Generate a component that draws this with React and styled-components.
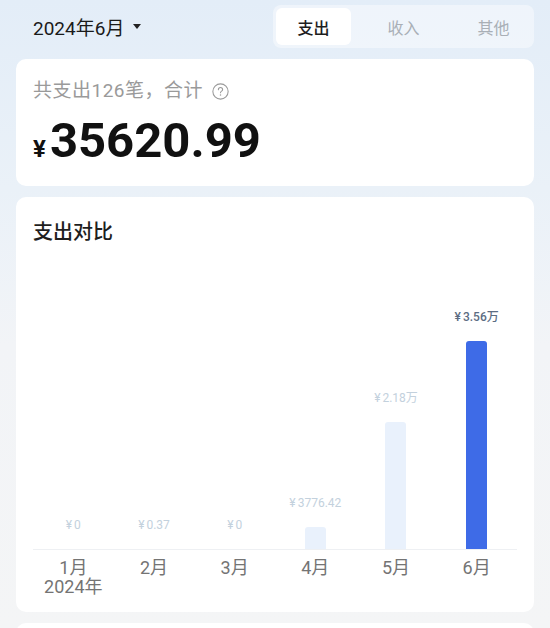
import React from "react";
import styled, { createGlobalStyle } from "styled-components";

const GlobalStyle = createGlobalStyle`
  body {
    margin: 0;
    font-family: Roboto, "Noto Sans CJK SC", sans-serif;
    background: #f4f5f7;
  }
`;

const months = [
  { month: "1月", year: "2024年", value: 0, label: "0" },
  { month: "2月", value: 0.37, label: "0.37" },
  { month: "3月", value: 0, label: "0" },
  { month: "4月", value: 3776.42, label: "3776.42" },
  { month: "5月", value: 21800, label: "2.18万" },
  { month: "6月", value: 35620.99, label: "3.56万", active: true },
];

const MAX_BAR = 208;

const App = () => {
  const max = Math.max(...months.map((m) => m.value));
  return (
    <Page>
      <GlobalStyle />
      <Header>
        <DatePicker>
          2024年6月
          <Caret />
        </DatePicker>
        <Tabs>
          <Tab $active>支出</Tab>
          <Tab>收入</Tab>
          <Tab>其他</Tab>
        </Tabs>
      </Header>

      <Card>
        <Summary>
          共支出126笔，合计
          <HelpIcon viewBox="0 0 16 16">
            <circle cx="8" cy="8" r="7.2" fill="none" stroke="#9a9a9a" strokeWidth="1" />
            <path
              d="M6 6.3a2 2 0 0 1 4 0c0 1.3-2 1.4-2 2.8"
              fill="none"
              stroke="#9a9a9a"
              strokeWidth="1"
              strokeLinecap="round"
            />
            <circle cx="8" cy="11.4" r="0.7" fill="#9a9a9a" />
          </HelpIcon>
        </Summary>
        <Amount>
          <Yen>¥</Yen>35620.99
        </Amount>
      </Card>

      <ChartCard>
        <Title>支出对比</Title>
        <Plot>
          {months.map((m) => (
            <Column key={m.month}>
              <BarLabel $active={m.active}>
                <small>¥</small>
                {m.label}
              </BarLabel>
              <Bar
                $active={m.active}
                style={{ height: `${(m.value / max) * MAX_BAR}px` }}
              />
            </Column>
          ))}
        </Plot>
        <Axis>
          {months.map((m) => (
            <Tick key={m.month}>
              <span>{m.month}</span>
              {m.year && <span>{m.year}</span>}
            </Tick>
          ))}
        </Axis>
      </ChartCard>

      <Card />
    </Page>
  );
};

export default App;

const Page = styled.div`
  height: 628px;
  padding: 0 16px;
  box-sizing: border-box;
  background: linear-gradient(180deg, #e3edf8 0%, #eaf1f8 30%, #f2f4f7 55%, #f4f5f6 100%);
  overflow: hidden;
`;

const Header = styled.div`
  height: 53px;
  display: flex;
  align-items: center;
  justify-content: space-between;
  margin-bottom: 6px;
`;

const DatePicker = styled.div`
  display: flex;
  align-items: center;
  padding-left: 17px;
  font-size: 19px;
  color: #1a1a1a;
`;

const Caret = styled.span`
  margin-left: 9px;
  width: 0;
  height: 0;
  border-left: 4px solid transparent;
  border-right: 4px solid transparent;
  border-top: 5px solid #222;
`;

const Tabs = styled.div`
  display: flex;
  gap: 15px;
  padding: 3px;
  border-radius: 8px;
  background: rgba(255, 255, 255, 0.42);
`;

const Tab = styled.div`
  width: 75px;
  height: 37px;
  display: flex;
  align-items: center;
  justify-content: center;
  border-radius: 6px;
  font-size: 16px;
  font-weight: ${(p) => (p.$active ? 500 : 400)};
  color: ${(p) => (p.$active ? "#1e1e1e" : "#a9afb6")};
  background: ${(p) => (p.$active ? "#fff" : "transparent")};
`;

const Card = styled.div`
  background: #fff;
  border-radius: 10px;
  padding: 20px 17px 21px;
  margin-bottom: 11px;
  min-height: 40px;
`;

const Summary = styled.div`
  display: flex;
  align-items: center;
  font-size: 19px;
  line-height: 24px;
  letter-spacing: 0.5px;
  color: #9a9a9a;
`;

const HelpIcon = styled.svg`
  width: 17px;
  height: 17px;
  margin-left: 9px;
`;

const Amount = styled.div`
  margin-top: 13px;
  font-size: 49px;
  line-height: 1;
  font-weight: 700;
  color: #111;
`;

const Yen = styled.span`
  font-size: 24px;
  margin-right: 4px;
`;

const ChartCard = styled(Card)`
  padding: 22px 17px 16px;
`;

const Title = styled.div`
  font-size: 20px;
  line-height: 26px;
  font-weight: 500;
  color: #1e1e1e;
`;

const Plot = styled.div`
  height: 304px;
  display: grid;
  grid-template-columns: repeat(6, 1fr);
  border-bottom: 1px solid #eef0f3;
`;

const Column = styled.div`
  display: flex;
  flex-direction: column;
  align-items: center;
  justify-content: flex-end;
`;

const BarLabel = styled.div`
  margin-bottom: 16px;
  font-size: 12px;
  line-height: 16px;
  color: ${(p) => (p.$active ? "#5b6c82" : "#c3d1dd")};
  font-weight: ${(p) => (p.$active ? 500 : 400)};

  small {
    font-size: 12px;
    margin-right: 2px;
  }
`;

const Bar = styled.div`
  width: 21px;
  border-radius: 3px 3px 0 0;
  background: ${(p) => (p.$active ? "#3e6be7" : "#e9f1fc")};
`;

const Axis = styled.div`
  display: grid;
  grid-template-columns: repeat(6, 1fr);
  margin-top: 8px;
`;

const Tick = styled.div`
  display: flex;
  flex-direction: column;
  align-items: center;
  font-size: 18px;
  line-height: 19px;
  color: #747474;
`;
